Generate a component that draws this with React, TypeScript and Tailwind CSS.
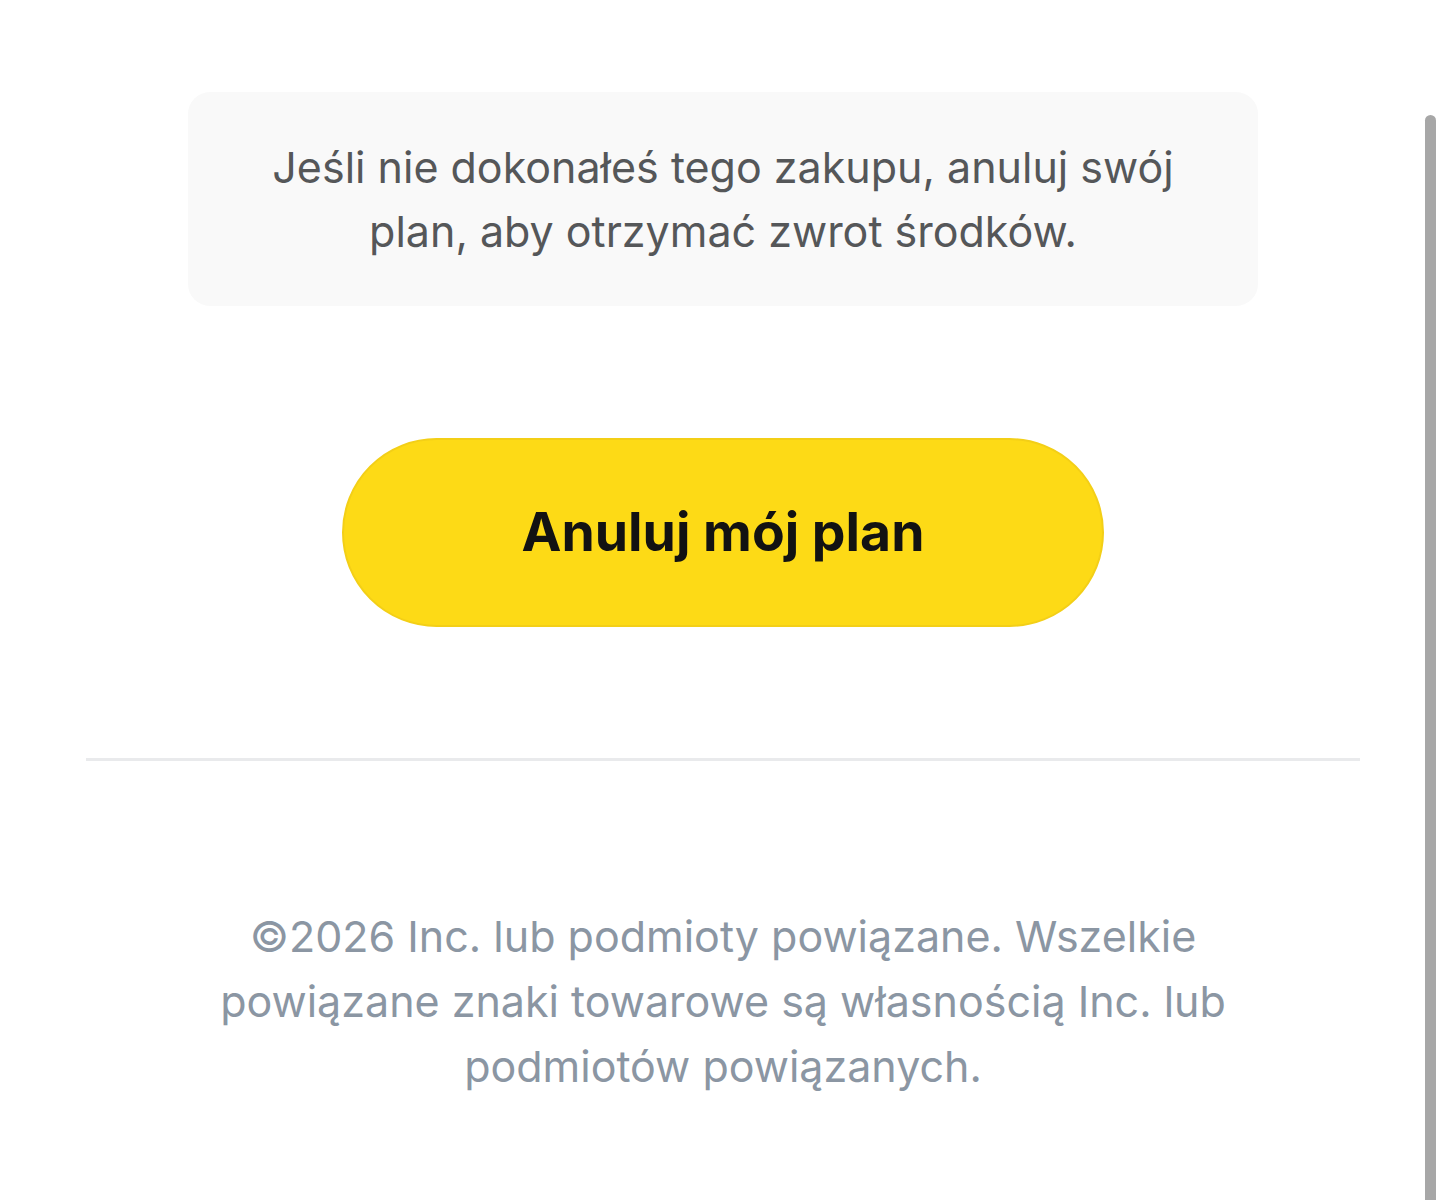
export default function App() {
  return (
    <div className="relative min-h-[1200px] w-full bg-white font-['Inter','Noto_Sans',sans-serif]">
      <div className="flex flex-col items-center pt-[92px]">
        {/* info box */}
        <div className="w-[1070px] rounded-[22px] bg-[#f9f9f9] px-[55px] py-[43px] text-center text-[43px] leading-[64px] text-[#555759]">
          Jeśli nie dokonałeś tego zakupu, anuluj swój plan, aby otrzymać zwrot środków.
        </div>

        <button className="mt-[132px] h-[189px] w-[762px] rounded-full border-2 border-[#f3cf17] bg-[#fdda16] text-[53.5px] font-bold text-[#121212]">
          Anuluj mój plan
        </button>

        <div className="mt-[131px] h-[3px] w-[1274px] bg-[#e9eaec]" />

        <p className="mt-[143px] w-[1020px] text-center text-[43px] leading-[65px] text-[#8b96a3]">
          ©2026 Inc. lub podmioty powiązane. Wszelkie powiązane znaki towarowe są własnością Inc. lub podmiotów powiązanych.
        </p>
      </div>

      {/* scrollbar overlay */}
      <div className="absolute right-[10px] top-[115px] bottom-0 w-[11px] rounded-t-full bg-[#a7a7a7]" />
    </div>
  );
}
